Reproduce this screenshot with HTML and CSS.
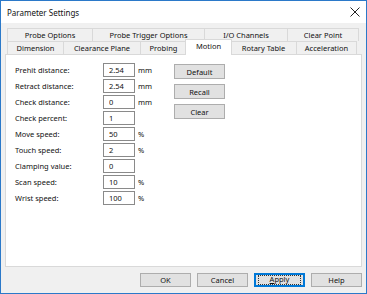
FILE: index.html
```html
<!DOCTYPE html>
<html lang="en">
<head>
  <meta charset="UTF-8">
  <title>Parameter Settings</title>
  <link rel="stylesheet" href="styles.css">
</head>
<body>

<div class="window">
  <div class="titlebar">
    <span class="title">Parameter Settings</span>
    <svg class="close" width="10" height="10" viewBox="0 0 10 10">
      <path d="M0.5 0.5 L9.5 9.5 M9.5 0.5 L0.5 9.5" stroke="#222" stroke-width="1" fill="none"/>
    </svg>
  </div>

  <div class="client">
    <!-- tabs -->
    <div class="tabs">
      <div class="tab-row back">
        <div class="tab">Probe Options</div>
        <div class="tab">Probe Trigger Options</div>
        <div class="tab">I/O Channels</div>
        <div class="tab">Clear Point</div>
      </div>
      <div class="tab-row front">
        <div class="tab">Dimension</div>
        <div class="tab">Clearance Plane</div>
        <div class="tab">Probing</div>
        <div class="tab active">Motion</div>
        <div class="tab">Rotary Table</div>
        <div class="tab">Acceleration</div>
      </div>
    </div>

    <div class="panel">
      <div class="fields">
        <div class="row"><label>Prehit distance:</label><input type="text" value="2.54"><span class="unit">mm</span></div>
        <div class="row"><label>Retract distance:</label><input type="text" value="2.54"><span class="unit">mm</span></div>
        <div class="row"><label>Check distance:</label><input type="text" value="0"><span class="unit">mm</span></div>
        <div class="row"><label>Check percent:</label><input type="text" value="1"></div>
        <div class="row"><label>Move speed:</label><input type="text" value="50"><span class="unit">%</span></div>
        <div class="row"><label>Touch speed:</label><input type="text" value="2"><span class="unit">%</span></div>
        <div class="row"><label>Clamping value:</label><input type="text" value="0"></div>
        <div class="row"><label>Scan speed:</label><input type="text" value="10"><span class="unit">%</span></div>
        <div class="row"><label>Wrist speed:</label><input type="text" value="100"><span class="unit">%</span></div>
      </div>
      <div class="side-buttons">
        <button class="btn side">Default</button>
        <button class="btn side">Recall</button>
        <button class="btn side">Clear</button>
      </div>
    </div>

    <div class="footer">
      <button class="btn">OK</button>
      <button class="btn">Cancel</button>
      <button class="btn default"><span class="focus"><u>A</u>pply</span></button>
      <button class="btn">Help</button>
    </div>
  </div>
</div>

</body>
</html>
```

FILE: styles.css
```css
body {
  margin: 0;
  font-family: "Noto Sans", "Open Sans", sans-serif;
  font-size: 7.5px;
  color: #111;
}
.window {
  width: 367px;
  height: 294px;
  box-sizing: border-box;
  border: 1px solid #2b79c9;
  display: flex;
  flex-direction: column;
  background: #f0f0f0;
}
.titlebar {
  height: 22px;
  background: white;
  display: flex;
  align-items: center;
  justify-content: space-between;
  padding: 0 6px 0 6px;
}
.title {
  font-size: 8px;
}
.client {
  flex: 1;
  display: flex;
  flex-direction: column;
  padding: 5px 4px 0 4px;
}
.tabs {
  margin: 0 2px;
}
.tab-row {
  display: flex;
  height: 13px;
}
.tab {
  box-sizing: border-box;
  height: 13px;
  border: 1px solid #d9d9d9;
  border-bottom: none;
  margin-left: -1px;
  background: #f0f0f0;
  display: flex;
  align-items: center;
  justify-content: center;
  white-space: nowrap;
}
.tab:first-child {
  margin-left: 0;
}
.back .tab:nth-child(1) { width: 86px; }
.back .tab:nth-child(2) { width: 113px; }
.back .tab:nth-child(3) { width: 84px; }
.back .tab:nth-child(4) { width: 72px; }
.front .tab:nth-child(1) { width: 57px; }
.front .tab:nth-child(2) { width: 78px; }
.front .tab:nth-child(3) { width: 47px; }
.front .tab:nth-child(4) { width: 47px; }
.front .tab:nth-child(5) { width: 67px; }
.front .tab:nth-child(6) { width: 61px; }
.tab.active {
  position: relative;
  z-index: 1;
  background: white;
  height: 16px;
  margin-top: -2px;
  margin-bottom: -1px;
  margin-left: -2px;
  margin-right: -1px;
  align-items: flex-start;
  padding-top: 1px;
}
.panel {
  height: 213px;
  box-sizing: border-box;
  background: white;
  border: 1px solid #d9d9d9;
  padding: 8px 9px;
  display: flex;
}
.fields {
  display: flex;
  flex-direction: column;
  gap: 2px;
  width: 159px;
}
.row {
  display: flex;
  align-items: center;
  height: 14px;
}
.row label {
  width: 88px;
}
.row input {
  box-sizing: border-box;
  width: 32px;
  height: 14px;
  border: 1px solid #8a8a8a;
  padding: 0 0 0 5px;
  font: inherit;
  color: #111;
  outline: none;
}
.unit {
  margin-left: 3px;
}
.side-buttons {
  display: flex;
  flex-direction: column;
  gap: 5px;
  padding-top: 1px;
}
.btn {
  box-sizing: border-box;
  width: 51px;
  height: 14px;
  background: #e1e1e1;
  border: 1px solid #adadad;
  font: inherit;
  padding: 0;
  color: #111;
}
.btn.side {
  height: 15px;
}
.footer {
  display: flex;
  justify-content: flex-end;
  gap: 6px;
  padding: 6px 0 0;
}
.btn.default {
  border: 1px solid #0078d7;
  box-shadow: inset 0 0 0 1px #0078d7;
  padding: 1px 3px;
}
.focus {
  display: flex;
  align-items: center;
  justify-content: center;
  height: 100%;
  box-sizing: border-box;
  border: 1px dotted #333;
  line-height: 1;
  white-space: nowrap;
}
```
